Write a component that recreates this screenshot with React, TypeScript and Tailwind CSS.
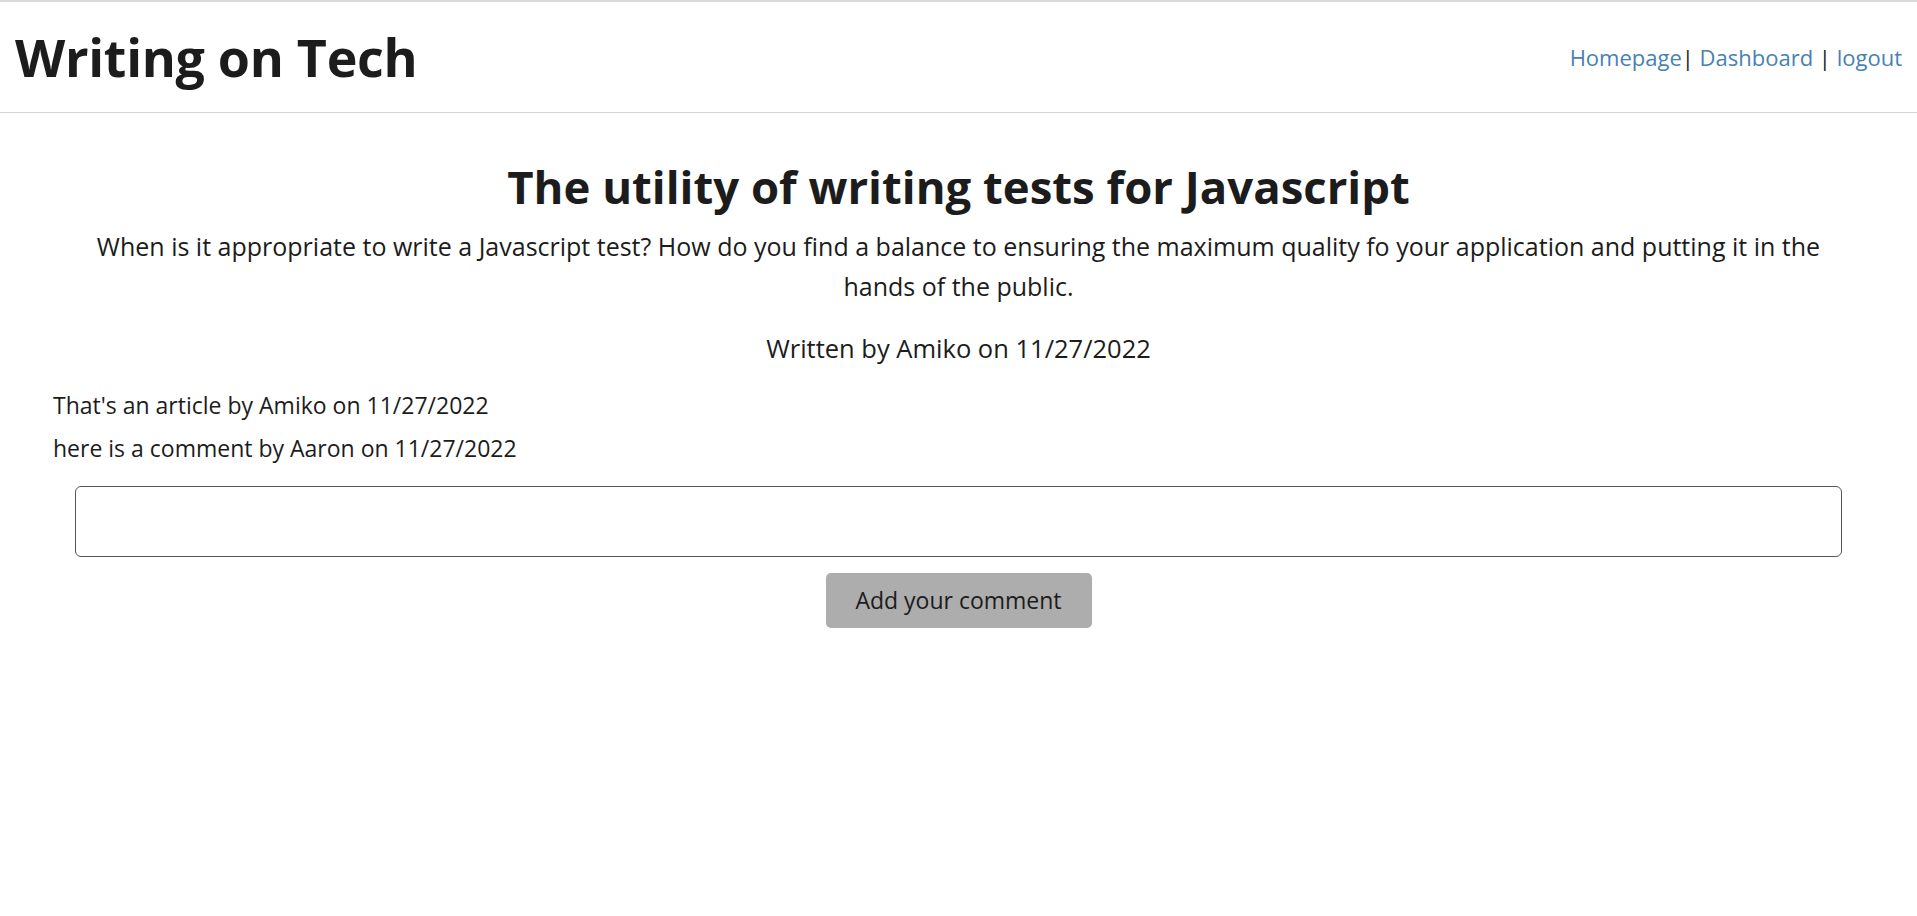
export default function App() {
  const comments = [
    "That's an article by Amiko on 11/27/2022",
    "here is a comment by Aaron on 11/27/2022",
  ];

  return (
    <div className="min-h-screen bg-white text-[#1c1c1c] font-['Open_Sans',sans-serif]">
      {/* Header */}
      <header className="flex items-center justify-between h-[113px] px-[15px] border-t-2 border-b border-t-[#d9d9d9] border-b-[#d4d4d4]">
        <h1 className="text-[52px] font-bold leading-none tracking-[-0.3px]">Writing on Tech</h1>
        <nav className="text-[22px] text-[#1c1c1c]">
          <a href="#" className="text-[#4682b4]">Homepage</a>|{" "}
          <a href="#" className="text-[#4682b4]">Dashboard</a> |{" "}
          <a href="#" className="text-[#4682b4]">logout</a>
        </nav>
      </header>

      {/* Article */}
      <main className="px-[53px]">
        <section className="text-center px-[20px]">
          <h2 className="mt-[45px] text-[45.5px] font-bold leading-[56px]">
            The utility of writing tests for Javascript
          </h2>
          <p className="mt-[12px] text-[25px] leading-[40px]">
            When is it appropriate to write a Javascript test? How do you find a balance to ensuring the maximum quality fo
            your application and putting it in the hands of the public.
          </p>
          <p className="mt-[22px] text-[25.5px] leading-[40px]">Written by Amiko on 11/27/2022</p>
        </section>

        <div className="mt-[16px] text-[23px] leading-[43px]">
          {comments.map((c) => (
            <p key={c}>{c}</p>
          ))}
        </div>

        <form className="mt-[16px] flex flex-col items-center px-[22px]">
          <input
            type="text"
            className="w-full h-[71px] rounded-[6px] border border-[#555] px-3 text-[23px] outline-none"
          />
          <button
            type="button"
            className="mt-[16px] h-[55px] w-[266px] rounded-[5px] bg-[#adadad] text-[23px] text-[#1c1c1c]"
          >
            Add your comment
          </button>
        </form>
      </main>
    </div>
  );
}
